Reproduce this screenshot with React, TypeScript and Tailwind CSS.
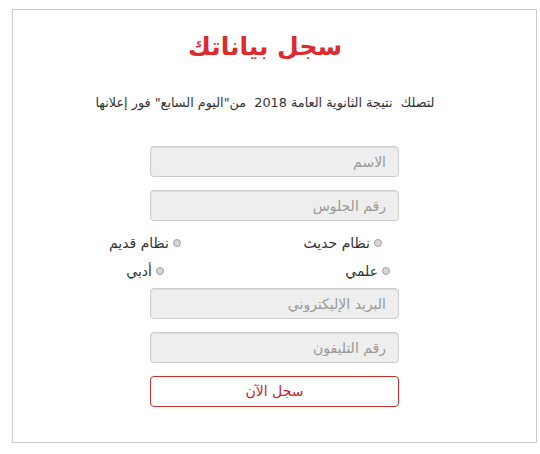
import React from "react";

const font = { fontFamily: '"DejaVu Sans", sans-serif' };

function Field({ ph }: { ph: string }) {
  return (
    <input
      type="text"
      placeholder={ph}
      dir="rtl"
      style={font}
      className="block w-full h-[31px] rounded-[4px] border border-[#cccccc] bg-[#eeeeee] px-[12px] text-[14px] text-[#555] placeholder:text-[#999999] outline-none shadow-[inset_0_1px_1px_rgba(0,0,0,0.075)]"
    />
  );
}

function Radio({ label }: { label: string }) {
  return (
    <label className="flex items-center gap-[4px] whitespace-nowrap text-[14px] text-[#333333]">
      <span className="inline-block shrink-0 w-[8px] h-[8px] rounded-full border border-[#a0a0a0] bg-[#d6d6d6]" />
      <span>{label}</span>
    </label>
  );
}

export default function App() {
  return (
    <div className="bg-white w-[540px] h-[454px] pt-[9px] pl-[12px]" style={font}>
      <div dir="rtl" className="w-[525px] h-[434px] border border-[#cccccc] bg-white">
        <h1 className="mt-[22px] pr-[19px] text-center text-[25px] font-bold leading-[30px] text-[#dc2a2f]">
          سجل بياناتك
        </h1>
        <p className="mt-[31px] pr-[19px] text-center text-[12.8px] leading-[20px] text-[#333333] whitespace-pre">
          {'لتصلك  نتيجة الثانوية العامة 2018  من"اليوم السابع" فور إعلانها'}
        </p>
        <div className="w-[249px] mx-auto mt-[33px]">
          <Field ph="الاسم" />
          <div className="mt-[13px]">
            <Field ph="رقم الجلوس" />
          </div>
        </div>
        <div className="mt-[8px] w-[249px] mx-auto">
          <div className="flex h-[28px] items-center">
            <div className="mr-[17px] w-[201px] shrink-0">
              <Radio label="نظام حديث" />
            </div>
            <div className="shrink-0">
              <Radio label="نظام قديم" />
            </div>
          </div>
          <div className="flex h-[28px] items-center">
            <div className="mr-[9px] w-[226px] shrink-0">
              <Radio label="علمي" />
            </div>
            <div className="shrink-0">
              <Radio label="أدبي" />
            </div>
          </div>
        </div>
        <div className="w-[249px] mx-auto mt-[3px]">
          <Field ph="البريد الإليكتروني" />
          <div className="mt-[13px]">
            <Field ph="رقم التليفون" />
          </div>
          <button
            type="button"
            style={font}
            className="mt-[13px] block w-full h-[31px] rounded-[4px] border border-[#c9302c] bg-white text-[14px] text-[#c0262f]"
          >
            سجل الآن
          </button>
        </div>
      </div>
    </div>
  );
}
